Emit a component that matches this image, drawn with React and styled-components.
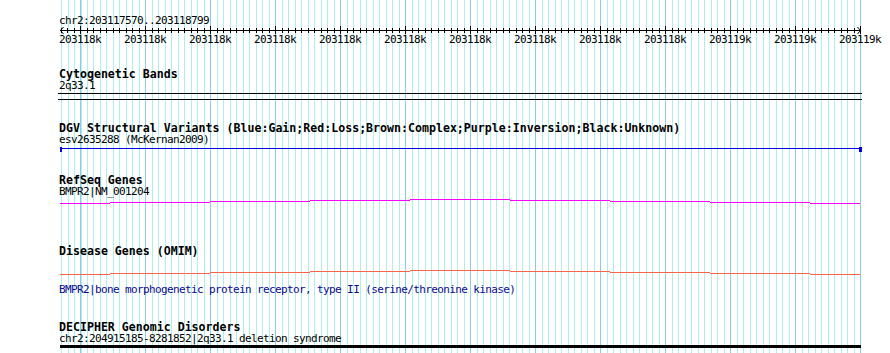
import React from "react";
import styled, { createGlobalStyle } from "styled-components";

const GlobalStyle = createGlobalStyle`
  html, body {
    margin: 0;
    padding: 0;
    background: #fff;
    overflow: hidden;
  }
`;

const Panel = styled.div`
  width: 890px;
  height: 353px;
  box-sizing: border-box;
  padding-top: 15px;
  display: flex;
  flex-direction: column;
  background-color: #fff;
  background-image: repeating-linear-gradient(90deg, #8ccbe8 0 1px, transparent 1px 65px),
    repeating-linear-gradient(90deg, #afeeee 0 1px, transparent 1px 6.5px);
  background-position: 80px 0, 60.5px 0;
  background-size: 781px 100%, 801px 100%;
  background-repeat: no-repeat;
  font-family: "DejaVu Sans Mono", monospace;
  color: #000;
`;

const Label = styled.div`
  padding-left: 59px;
  margin-top: ${(p) => p.$top || 0}px;
  height: ${(p) => p.$h || 12}px;
  font-size: 11px;
  letter-spacing: -0.62px;
  line-height: 12px;
  white-space: nowrap;
  color: ${(p) => p.$color || "#000"};
`;

const TrackTitle = styled.div`
  padding-left: 59px;
  margin-top: ${(p) => p.$top || 0}px;
  height: 12px;
  font-size: 11.6px;
  font-weight: bold;
  line-height: 12px;
  white-space: nowrap;
`;

const TickRow = styled.div`
  display: flex;
  padding-left: 47.5px;
  height: 12px;
`;

const TickLabel = styled.span`
  flex: 0 0 65px;
  text-align: center;
  font-size: 11px;
  letter-spacing: -0.62px;
  line-height: 12px;
  white-space: nowrap;
`;

const Glyph = styled.svg`
  display: block;
  flex-shrink: 0;
  width: 890px;
  height: ${(p) => p.$h}px;
  margin-top: ${(p) => p.$top || 0}px;
  overflow: visible;
`;

const Band = styled.div`
  margin: 1px 0 0 58px;
  width: 804px;
  height: 5px;
  border-top: 1px solid #000;
  border-bottom: 1px solid #000;
`;

const ThickBar = styled.div`
  margin-left: 60px;
  width: 801px;
  height: 3px;
  background: #000;
`;

const ticks = [];
for (let k = -3; k <= 120; k++) ticks.push({ x: Math.round(80 + 6.5 * k), major: k % 10 === 0 });

const labels = Array.from({ length: 13 }, (_, i) => (i < 10 ? "203118k" : "203119k"));

// staircase offsets of the gene line, one per segment
const stairs = [
  [60, 110, 4],
  [110, 210, 3],
  [210, 310, 2],
  [310, 410, 1],
  [410, 510, 0],
  [510, 610, 1],
  [610, 710, 2],
  [710, 810, 3],
  [810, 860, 4],
];

const Ruler = () => (
  <Glyph $h={8} shapeRendering="crispEdges">
    <rect x={60} y={4} width={801} height={1} fill="#000" />
    {ticks.map((t) => (
      <rect
        key={t.x}
        x={t.x}
        y={t.major ? 0 : 2}
        width={1}
        height={t.major ? 8 : 5}
        fill="#000"
      />
    ))}
    <g stroke="#000" strokeWidth={1} fill="none" shapeRendering="auto">
      <polyline points="63.5,1 60.5,4.5 63.5,8" />
      <polyline points="857.5,1 860.5,4.5 857.5,8" />
    </g>
  </Glyph>
);

const StairLine = ({ color, base, top }) => (
  <Glyph $h={8} $top={top} shapeRendering="crispEdges">
    {stairs.map(([a, b, o]) => (
      <rect key={a} x={a} y={base + o} width={b - a} height={1} fill={color} />
    ))}
  </Glyph>
);

const SpanLine = () => (
  <Glyph $h={6} shapeRendering="crispEdges">
    <rect x={60} y={2} width={801} height={1} fill="#0000e6" />
    <rect x={60} y={1} width={2} height={5} fill="#0000e6" />
    <rect x={859} y={1} width={3} height={5} fill="#0000e6" />
  </Glyph>
);

const App = () => (
  <>
    <GlobalStyle />
    <Panel>
      <Label $h={11}>chr2:203117570..203118799</Label>
      <Ruler />
      <TickRow>
        {labels.map((l, i) => (
          <TickLabel key={i}>{l}</TickLabel>
        ))}
      </TickRow>

      <TrackTitle $top={22}>Cytogenetic Bands</TrackTitle>
      <Label>2q33.1</Label>
      <Band />

      <TrackTitle $top={22}>
        DGV Structural Variants (Blue:Gain;Red:Loss;Brown:Complex;Purple:Inversion;Black:Unknown)
      </TrackTitle>
      <Label>esv2635288 (McKernan2009)</Label>
      <SpanLine />

      <TrackTitle $top={22}>RefSeq Genes</TrackTitle>
      <Label>BMPR2|NM_001204</Label>
      <StairLine color="#ff00ff" base={1} />

      <TrackTitle $top={39}>Disease Genes (OMIM)</TrackTitle>
      <StairLine color="#ff6347" base={2} top={11} />
      <Label $top={8} $color="#0a0a8c">
        BMPR2|bone morphogenetic protein receptor, type II (serine/threonine kinase)
      </Label>

      <TrackTitle $top={25}>DECIPHER Genomic Disorders</TrackTitle>
      <Label>chr2:204915185-8281852|2q33.1 deletion syndrome</Label>
      <ThickBar />
    </Panel>
  </>
);

export default App;
